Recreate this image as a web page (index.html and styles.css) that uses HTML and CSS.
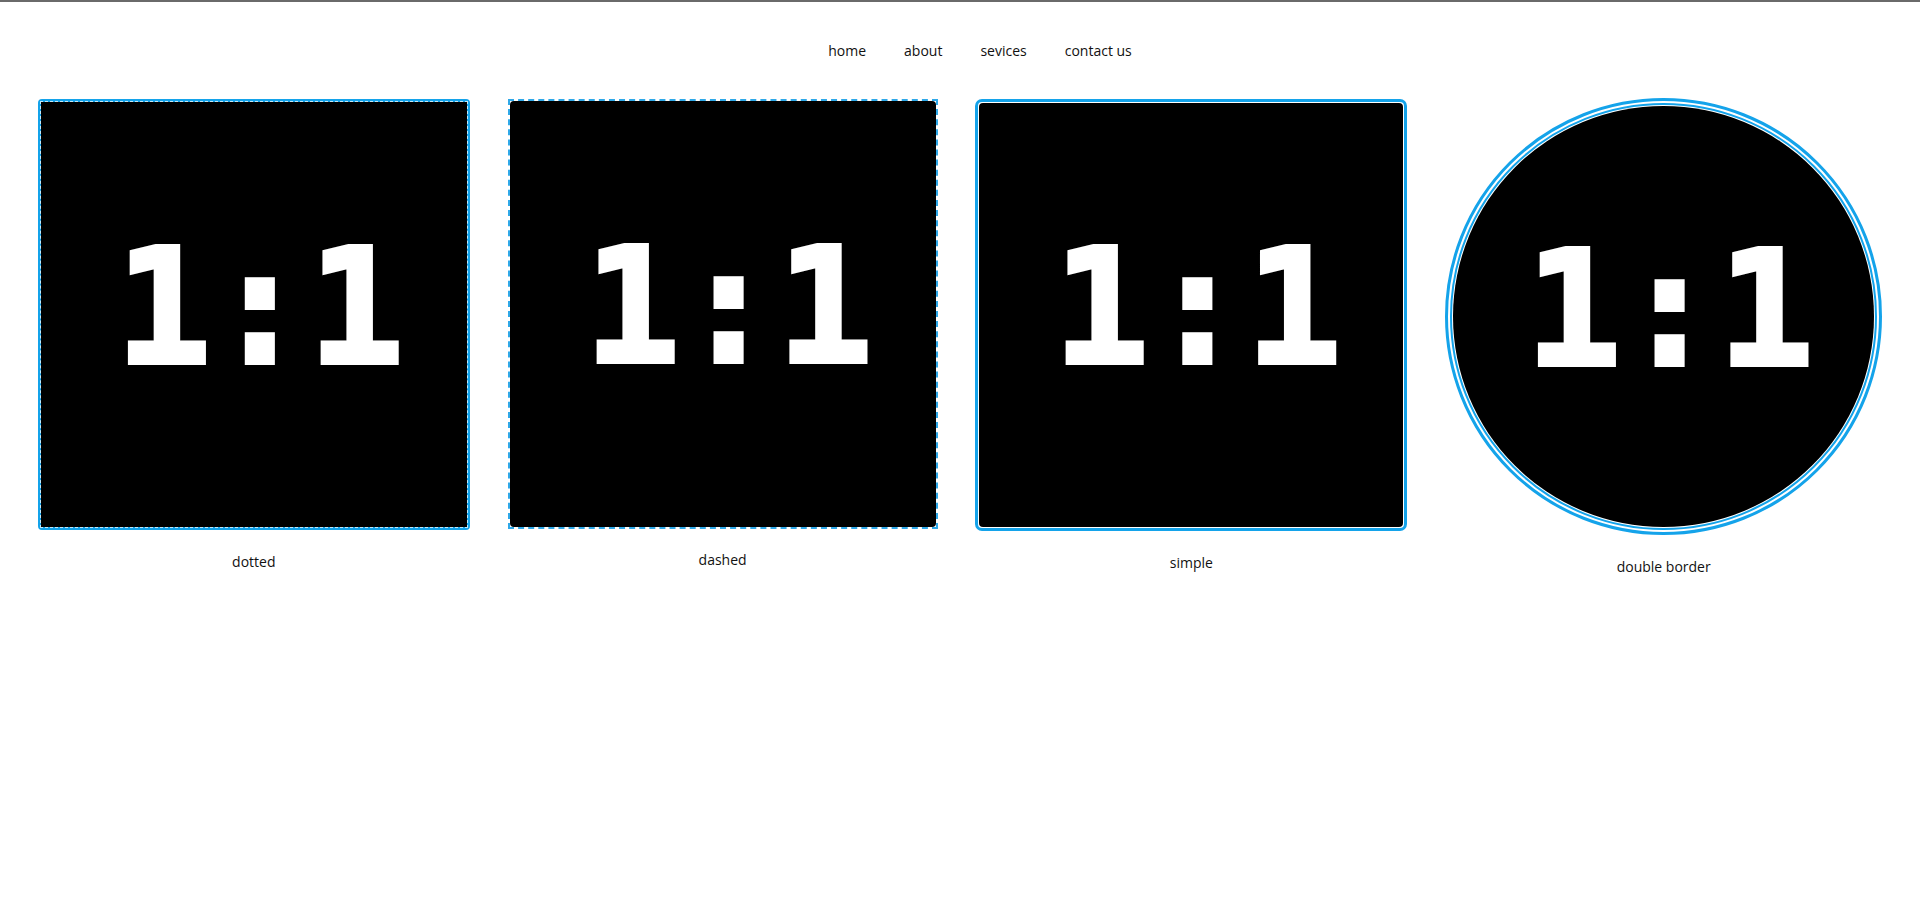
FILE: index.html
```html
<!DOCTYPE html>
<html lang="en">
<head>
<meta charset="utf-8">
<title>Borders</title>
<link rel="stylesheet" href="styles.css">
</head>
<body>
<div class="topline"></div>
<nav class="nav">
  <ul class="nav-list">
    <li>home</li>
    <li>about</li>
    <li>sevices</li>
    <li>contact us</li>
  </ul>
</nav>
<main class="gallery">
  <figure class="item">
    <div class="frame frame-dotted">
      <div class="pic pic-dotted"><span class="ratio">1:1</span></div>
    </div>
    <figcaption class="caption">dotted</figcaption>
  </figure>
  <figure class="item">
    <div class="frame frame-dashed">
      <div class="pic pic-dashed"><span class="ratio">1:1</span></div>
    </div>
    <figcaption class="caption caption-dashed">dashed</figcaption>
  </figure>
  <figure class="item">
    <div class="frame frame-simple">
      <div class="pic pic-simple"><span class="ratio">1:1</span></div>
    </div>
    <figcaption class="caption">simple</figcaption>
  </figure>
  <figure class="item">
    <div class="frame ring-outer">
      <div class="ring-inner">
        <div class="pic pic-circle"><span class="ratio">1:1</span></div>
      </div>
    </div>
    <figcaption class="caption">double border</figcaption>
  </figure>
</main>
</body>
</html>
```

FILE: styles.css
```css
* { box-sizing: border-box; }

html, body {
  margin: 0;
  padding: 0;
  background: #fff;
}

body {
  font-family: "Open Sans", "Noto Sans", Arial, sans-serif;
  font-size: 14px;
  color: #111;
}

.topline {
  height: 2px;
  background: #6a6a6a;
}

.nav {
  padding-top: 39px;
}

.nav-list {
  list-style: none;
  margin: 0;
  padding: 0 0 0 40px;
  display: flex;
  justify-content: center;
  gap: 38px;
  line-height: 20px;
}

.gallery {
  margin-top: 38px;
  display: flex;
  justify-content: space-evenly;
  align-items: flex-start;
}

.item {
  margin: 0;
  display: flex;
  flex-direction: column;
  align-items: center;
}

.caption {
  margin-top: 22px;
  line-height: 20px;
}

.caption-dashed {
  margin-top: 21px;
}

.pic {
  width: 100%;
  height: 100%;
  background: #000;
  display: flex;
  align-items: center;
  justify-content: center;
  overflow: hidden;
}

.ratio {
  font-family: "DejaVu Sans Mono", "Liberation Mono", monospace;
  font-weight: bold;
  font-size: 160px;
  line-height: 1;
  color: #fff;
  -webkit-text-stroke: 4px #fff;
  padding-left: 12px;
  padding-bottom: 14px;
}

/* dotted */
.frame-dotted {
  width: 432px;
  height: 431px;
  border: 2px solid #14a3ea;
  border-radius: 4px;
  background: #14a3ea;
}
.pic-dotted {
  border: 1px dashed rgba(255, 255, 255, 0.75);
  background-clip: padding-box;
}

/* dashed */
.frame-dashed {
  width: 430px;
  height: 430px;
  border: 2px dashed #2ea8e8;
}
.pic-dashed {
  border-radius: 4px;
}

/* simple */
.frame-simple {
  width: 432px;
  height: 432px;
  border: 3px solid #14a3ea;
  border-radius: 7px;
  padding: 1px;
}
.pic-simple {
  border-radius: 4px;
}

/* double border circle */
.ring-outer {
  width: 437px;
  height: 437px;
  margin-top: -1px;
  border: 3px solid #14a3ea;
  border-radius: 50%;
  padding: 2px;
}
.ring-inner {
  width: 100%;
  height: 100%;
  border: 2px solid #14a3ea;
  border-radius: 50%;
  padding: 1px;
}
.pic-circle {
  border-radius: 50%;
}
```
